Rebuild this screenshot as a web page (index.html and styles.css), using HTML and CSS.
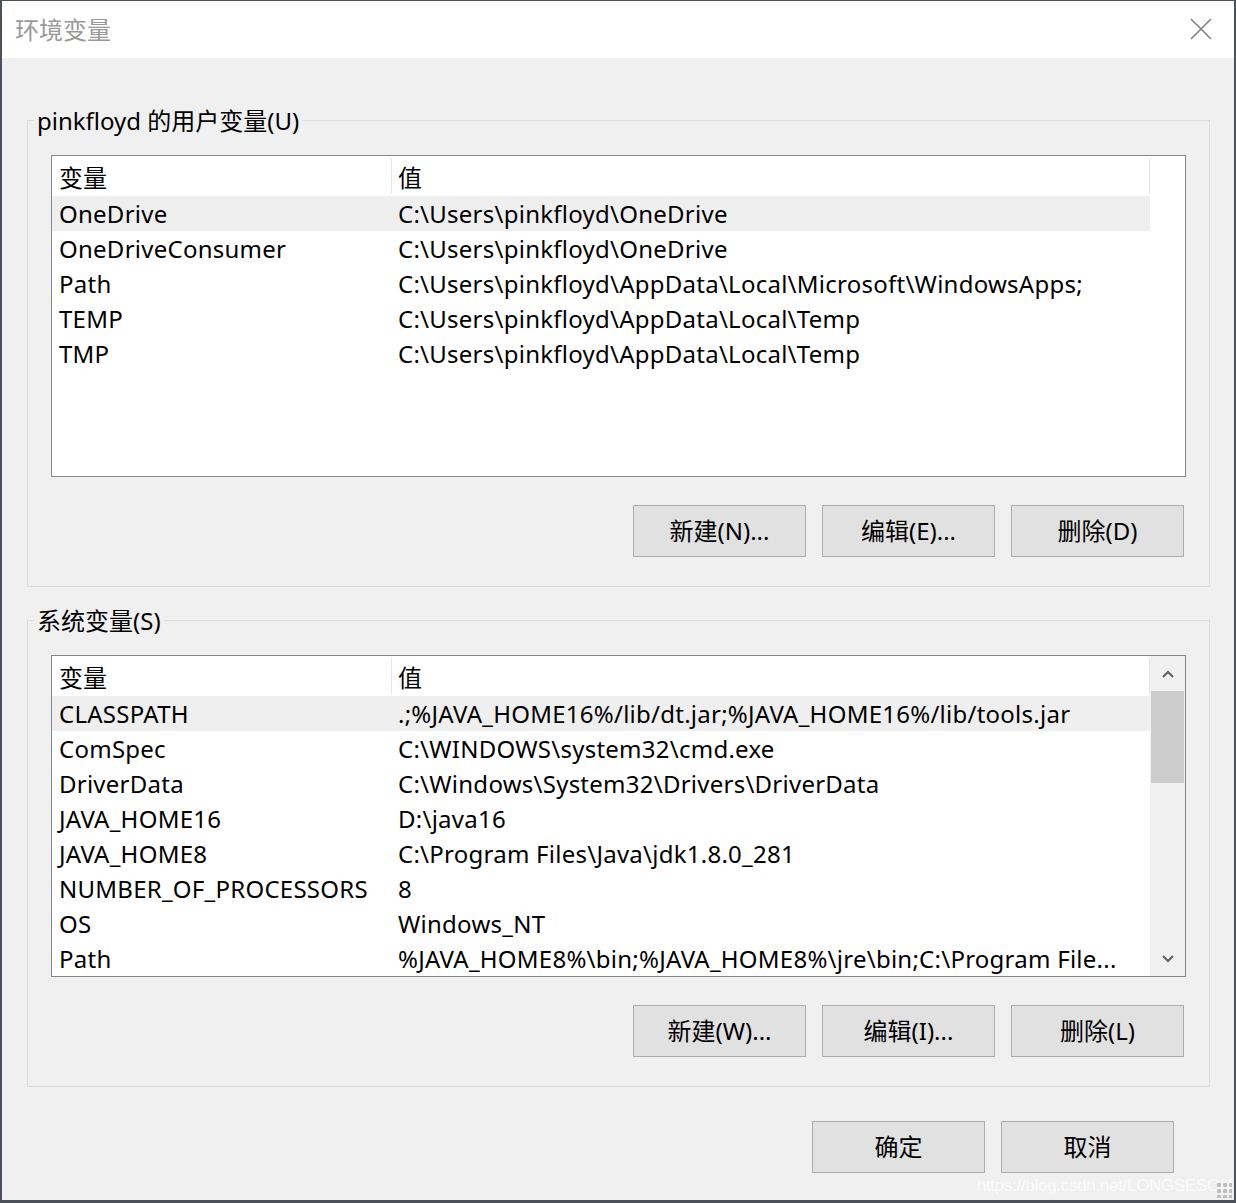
FILE: index.html
```html
<!DOCTYPE html>
<html lang="zh-CN">
<head>
<meta charset="utf-8">
<title>环境变量</title>
<link rel="stylesheet" href="styles.css">
</head>
<body>
<div class="window">
  <div class="titlebar">
    <span class="title">环境变量</span>
    <svg class="close" width="22" height="22" viewBox="0 0 22 22"><path d="M1 1 L21 21 M21 1 L1 21" stroke="#808080" stroke-width="1.6" fill="none"/></svg>
  </div>
  <div class="content">
    <fieldset class="group">
      <legend>pinkfloyd 的用户变量(U)</legend>
      <div class="listbox">
        <div class="cols">
          <div class="row head"><div class="c1">变量</div><div class="c2 hd">值</div></div>
          <div class="row sel"><div class="c1">OneDrive</div><div class="c2">C:\Users\pinkfloyd\OneDrive</div></div>
          <div class="row"><div class="c1">OneDriveConsumer</div><div class="c2">C:\Users\pinkfloyd\OneDrive</div></div>
          <div class="row"><div class="c1">Path</div><div class="c2">C:\Users\pinkfloyd\AppData\Local\Microsoft\WindowsApps;</div></div>
          <div class="row"><div class="c1">TEMP</div><div class="c2">C:\Users\pinkfloyd\AppData\Local\Temp</div></div>
          <div class="row"><div class="c1">TMP</div><div class="c2">C:\Users\pinkfloyd\AppData\Local\Temp</div></div>
        </div>
        <div class="noscroll"></div>
      </div>
      <div class="buttons">
        <button class="btn">新建(N)...</button>
        <button class="btn">编辑(E)...</button>
        <button class="btn">删除(D)</button>
      </div>
    </fieldset>

    <fieldset class="group second">
      <legend>系统变量(S)</legend>
      <div class="listbox">
        <div class="cols">
          <div class="row head"><div class="c1">变量</div><div class="c2 hd">值</div></div>
          <div class="row sel"><div class="c1">CLASSPATH</div><div class="c2">.;%JAVA_HOME16%/lib/dt.jar;%JAVA_HOME16%/lib/tools.jar</div></div>
          <div class="row"><div class="c1">ComSpec</div><div class="c2">C:\WINDOWS\system32\cmd.exe</div></div>
          <div class="row"><div class="c1">DriverData</div><div class="c2">C:\Windows\System32\Drivers\DriverData</div></div>
          <div class="row"><div class="c1">JAVA_HOME16</div><div class="c2">D:\java16</div></div>
          <div class="row"><div class="c1">JAVA_HOME8</div><div class="c2">C:\Program Files\Java\jdk1.8.0_281</div></div>
          <div class="row"><div class="c1">NUMBER_OF_PROCESSORS</div><div class="c2">8</div></div>
          <div class="row"><div class="c1">OS</div><div class="c2">Windows_NT</div></div>
          <div class="row"><div class="c1">Path</div><div class="c2">%JAVA_HOME8%\bin;%JAVA_HOME8%\jre\bin;C:\Program File...</div></div>
        </div>
        <div class="scrollbar">
          <div class="sb-btn"><svg width="12" height="8" viewBox="0 0 12 8"><path d="M1 7 L6 2 L11 7" stroke="#606060" stroke-width="2" fill="none"/></svg></div>
          <div class="sb-track"><div class="sb-thumb"></div></div>
          <div class="sb-btn"><svg width="12" height="8" viewBox="0 0 12 8"><path d="M1 1 L6 6 L11 1" stroke="#606060" stroke-width="2" fill="none"/></svg></div>
        </div>
      </div>
      <div class="buttons">
        <button class="btn">新建(W)...</button>
        <button class="btn">编辑(I)...</button>
        <button class="btn">删除(L)</button>
      </div>
    </fieldset>

    <div class="footer">
      <button class="btn">确定</button>
      <button class="btn">取消</button>
    </div>
  </div>
  <div class="watermark">https://blog.csdn.net/LONGSESON</div>
  <div class="grip"></div>
</div>
</body>
</html>
```
FILE: styles.css
```css
* { box-sizing: border-box; }
html, body {
  margin: 0;
  padding: 0;
  background: #4b5059;
  width: 1236px;
  height: 1203px;
  overflow: hidden;
}
body {
  font-family: "Noto Sans", "Noto Sans CJK SC", sans-serif;
  font-size: 24px;
  color: #000;
  padding: 1px 0 0 2px;
}
.window {
  position: relative;
  width: 1232px;
  height: 1199px;
  background: #f0f0f0;
  display: flex;
  flex-direction: column;
}
.titlebar {
  height: 57px;
  background: #fff;
  display: flex;
  align-items: center;
  justify-content: space-between;
  padding: 0 22px 0 13px;
}
.title {
  color: #999;
  font-size: 24px;
  line-height: 30px;
}
.close { display: block; margin-top: -2px; }
.content {
  padding: 45px 0 0 25px;
  display: flex;
  flex-direction: column;
}
.group {
  margin: 0;
  width: 1183px;
  border: 1px solid #dcdcdc;
  padding: 18px 23px 29px 23px;
  min-width: 0;
}
.group.second { margin-top: 16px; }
.group legend {
  margin-left: -17px;
  padding: 0 3px;
  line-height: 36px;
  height: 34px;
  font-size: 24px;
}
.listbox {
  height: 322px;
  border: 1px solid #828790;
  background: #fff;
  display: flex;
}
.cols {
  flex: 1;
  min-width: 0;
  display: flex;
  flex-direction: column;
}
.row {
  display: flex;
  height: 35px;
  line-height: 36px;
  white-space: nowrap;
  letter-spacing: 0.25px;
}
.row.head { height: 40px; line-height: 44px; letter-spacing: 0; }
.row.sel { background: #efefef; }
.c1 {
  width: 339px;
  padding-left: 7px;
  overflow: hidden;
}
.c2 {
  flex: 1;
  padding-left: 7px;
  overflow: hidden;
}
.c2.hd {
  border-left: 1px solid #e5e5e5;
  padding-left: 6px;
  margin: 2px 0;
  line-height: 40px;
  border-right: 1px solid #e5e5e5;
}
.noscroll { width: 35px; }
.scrollbar {
  width: 35px;
  background: #f0f0f0;
  display: flex;
  flex-direction: column;
  padding: 0 1px 0 1px;
}
.sb-btn {
  height: 35px;
  display: flex;
  align-items: center;
  justify-content: center;
}
.sb-track { flex: 1; }
.sb-thumb { height: 92px; background: #cdcdcd; }
.buttons {
  display: flex;
  justify-content: flex-end;
  gap: 16px;
  margin-top: 28px;
  padding-right: 2px;
}
.btn {
  width: 173px;
  height: 52px;
  border: 1px solid #adadad;
  background: #e1e1e1;
  font-family: "Noto Sans", "Noto Sans CJK SC", sans-serif;
  font-size: 24px;
  color: #000;
  padding: 0;
  line-height: 48px;
}
.footer {
  display: flex;
  justify-content: flex-end;
  gap: 16px;
  margin-top: 34px;
  padding-right: 62px;
  width: 1209px;
}
.watermark {
  position: absolute;
  right: 2px;
  bottom: 4px;
  font-family: "Liberation Sans", Arial, sans-serif;
  font-size: 17px;
  color: rgba(255, 255, 255, 0.75);
  letter-spacing: -0.3px;
}
.grip {
  position: absolute;
  right: 2px;
  bottom: 2px;
  width: 16px;
  height: 16px;
  background-image: radial-gradient(circle, #b0b0b0 2px, transparent 2.5px);
  background-size: 6px 6px;
  opacity: 0.8;
}
```
